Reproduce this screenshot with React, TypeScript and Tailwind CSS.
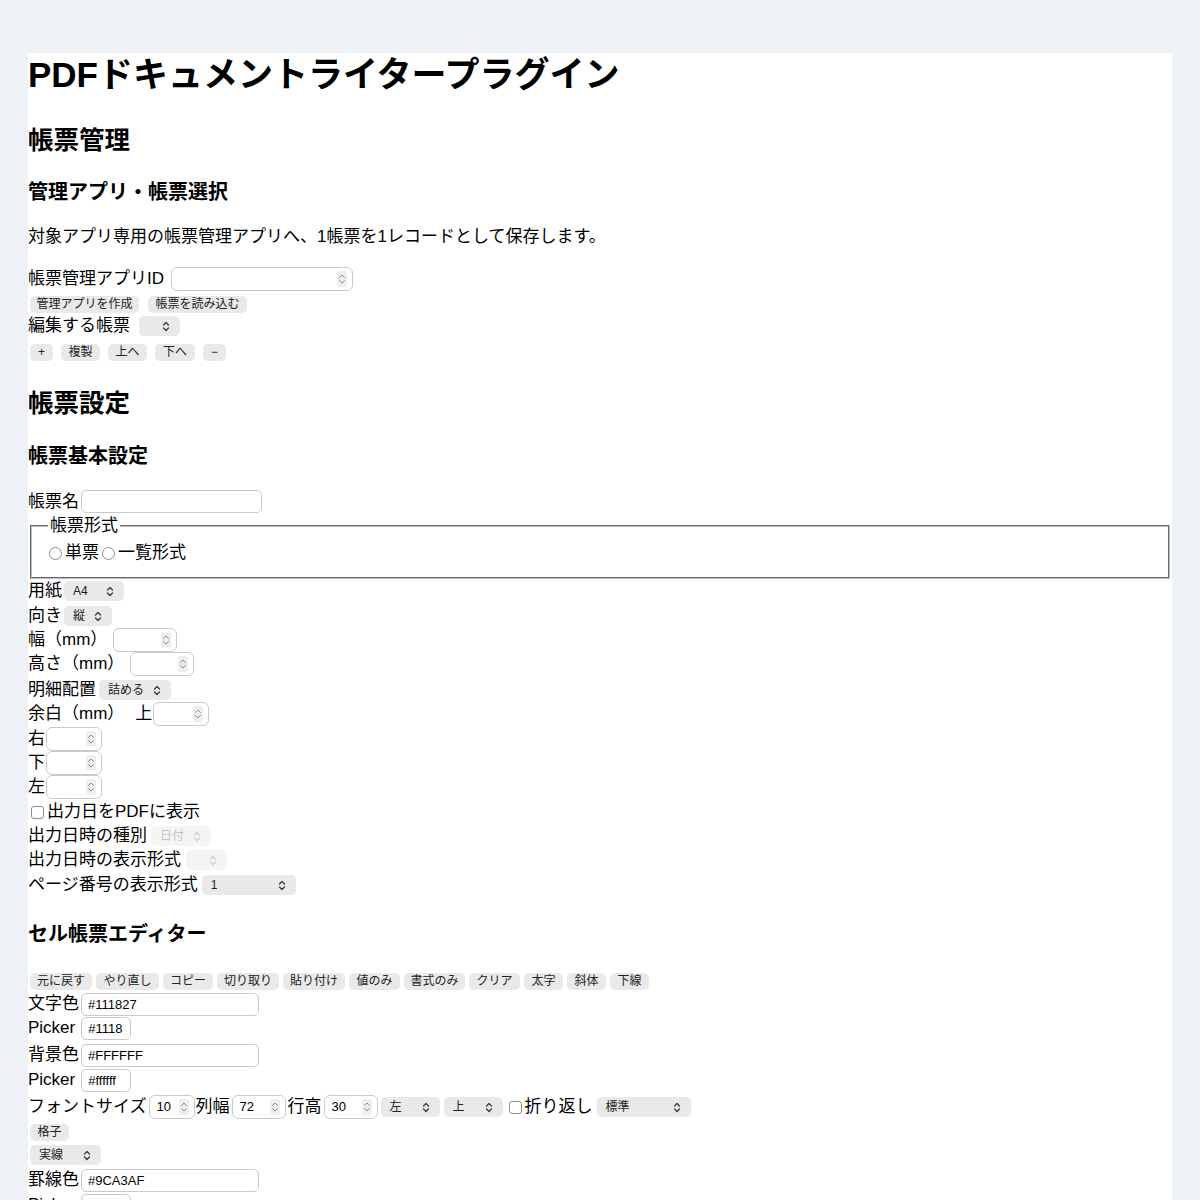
import React from "react";

function Chevrons({ dim }: { dim?: boolean }) {
  return (
    <svg width="8" height="11" viewBox="0 0 8 11" fill="none" stroke={dim ? "#cfcfcf" : "#3a3a3a"} strokeWidth="1.3" strokeLinecap="round" strokeLinejoin="round">
      <path d="M1.5 4 4 1.5 6.5 4M1.5 7 4 9.5 6.5 7" />
    </svg>
  );
}

function Spinner() {
  return (
    <span className="flex h-[16px] w-[10px] items-center justify-center rounded-[3px] bg-[#eeeeee]">
      <svg width="8" height="14" viewBox="0 0 8 14" fill="none" stroke="#8f8f8f" strokeWidth="1" strokeLinecap="round" strokeLinejoin="round">
        <path d="M1.5 5.5 4 3 6.5 5.5M1.5 8.5 4 11 6.5 8.5" />
      </svg>
    </span>
  );
}

function Btn({ label, w }: { label: string; w: string }) {
  return (
    <button type="button" className={`flex h-[17px] items-center justify-center rounded-[5px] bg-[#e9e9e9] text-[12px] leading-none text-[#222] ${w}`}>
      {label}
    </button>
  );
}

function Select({ value = "", w, cls = "ml-[2px]", disabled }: { value?: string; w: string; cls?: string; disabled?: boolean }) {
  return (
    <div
      className={`flex h-[20px] shrink-0 items-center justify-between rounded-[5px] pl-[9px] pr-[10px] text-[12px] ${
        disabled ? "bg-[#f5f5f5] text-[#c4c4c4]" : "bg-[#e9e9e9] text-[#222]"
      } ${w} ${cls}`}
    >
      <span>{value}</span>
      <Chevrons dim={disabled} />
    </div>
  );
}

function NumInput({ value = "", w, cls = "ml-[2px]" }: { value?: string; w: string; cls?: string }) {
  return (
    <div className={`flex h-[24px] shrink-0 items-center justify-between rounded-[6px] border border-[#cacaca] bg-white pl-[7px] pr-[5px] text-[13px] ${w} ${cls}`}>
      <span>{value}</span>
      <Spinner />
    </div>
  );
}

function TextInput({ value = "", w, cls = "ml-[2px]" }: { value?: string; w: string; cls?: string }) {
  return (
    <input
      readOnly
      defaultValue={value}
      className={`h-[23px] shrink-0 rounded-[5px] border border-[#cacaca] bg-white px-[6px] text-[13px] text-black outline-none ${w} ${cls}`}
    />
  );
}

function Box({ cls = "" }: { cls?: string }) {
  return <span className={`h-[13px] w-[13px] shrink-0 rounded-[3px] border border-[#8e8e8e] bg-white ${cls}`} />;
}

function Radio({ cls = "" }: { cls?: string }) {
  return <span className={`h-[13px] w-[13px] shrink-0 rounded-full border border-[#8e8e8e] bg-white ${cls}`} />;
}

const row = "flex h-[24px] items-center text-[17px]";

export default function App() {
  return (
    <div className="min-h-screen bg-[#eef1f6] px-[28px] pt-[53px] font-['Liberation_Sans','Noto_Sans_CJK_JP',sans-serif] text-black">
      <div className="bg-white pb-[40px]">
        <h1 className="flex h-[44px] items-center text-[35px] font-bold">PDFドキュメントライタープラグイン</h1>

        <h2 className="mt-[25px] flex h-[36px] items-center text-[25.5px] font-bold">帳票管理</h2>
        <h3 className="mt-[20px] flex h-[28px] items-center text-[20px] font-bold">管理アプリ・帳票選択</h3>
        <p className="mt-[19px] flex h-[24px] items-center text-[17px]">
          対象アプリ専用の帳票管理アプリへ、1帳票を1レコードとして保存します。
        </p>

        <div className="mt-[17px] flex h-[25px] items-center text-[17px]">
          <span>帳票管理アプリID</span>
          <NumInput w="w-[182px]" cls="ml-[7px]" />
        </div>
        <div className="mt-[2px] flex h-[22px] items-center gap-[9px] pl-[2px]">
          <Btn label="管理アプリを作成" w="w-[109px]" />
          <Btn label="帳票を読み込む" w="w-[99px]" />
        </div>
        <div className="flex h-[22px] items-center text-[17px]">
          <span>編集する帳票</span>
          <Select w="w-[41px]" cls="ml-[9px]" />
        </div>
        <div className="mt-[4px] flex h-[22px] items-center gap-[8px] pl-[2px]">
          <Btn label="+" w="w-[23px]" />
          <Btn label="複製" w="w-[39px]" />
          <Btn label="上へ" w="w-[39px]" />
          <Btn label="下へ" w="w-[40px]" />
          <Btn label="−" w="w-[23px]" />
        </div>

        <h2 className="mt-[22px] flex h-[36px] items-center text-[25.5px] font-bold">帳票設定</h2>
        <h3 className="mt-[21px] flex h-[28px] items-center text-[20px] font-bold">帳票基本設定</h3>

        <div className="mt-[19px] flex h-[25px] items-center text-[17px]">
          <span>帳票名</span>
          <TextInput w="w-[181px]" />
        </div>

        <fieldset className="mx-[2px] border-2 border-[#bdbdbd] px-[16px] pb-[14px] pt-[5px] [border-style:groove]">
          <legend className="px-[2px] text-[17px] leading-[24px]">帳票形式</legend>
          <div className="flex h-[20px] items-center text-[17px]">
            <Radio cls="ml-[1px] mr-[3px]" />
            <span>単票</span>
            <Radio cls="ml-[3px] mr-[3px]" />
            <span>一覧形式</span>
          </div>
        </fieldset>

        <div className={row}>
          <span>用紙</span>
          <Select value="A4" w="w-[60px]" />
        </div>
        <div className={`mt-[1px] ${row}`}>
          <span>向き</span>
          <Select value="縦" w="w-[48px]" />
        </div>
        <div className={row}>
          <span>幅（mm）</span>
          <NumInput w="w-[64px]" cls="ml-[6px]" />
        </div>
        <div className={row}>
          <span>高さ（mm）</span>
          <NumInput w="w-[64px]" cls="ml-[6px]" />
        </div>
        <div className={`mt-[2px] ${row}`}>
          <span>明細配置</span>
          <Select value="詰める" w="w-[72px]" cls="ml-[3px]" />
        </div>
        <div className={row}>
          <span>余白（mm）</span>
          <span className="ml-[11px]">上</span>
          <NumInput w="w-[56px]" cls="ml-[1px]" />
        </div>
        <div className={`mt-[1px] ${row}`}>
          <span>右</span>
          <NumInput w="w-[56px]" cls="ml-[1px]" />
        </div>
        <div className={row}>
          <span>下</span>
          <NumInput w="w-[56px]" cls="ml-[1px]" />
        </div>
        <div className={row}>
          <span>左</span>
          <NumInput w="w-[56px]" cls="ml-[1px]" />
        </div>
        <div className={`mt-[1px] ${row}`}>
          <Box cls="ml-[3px] mr-[3px]" />
          <span>出力日をPDFに表示</span>
        </div>
        <div className={row}>
          <span>出力日時の種別</span>
          <Select value="日付" w="w-[60px]" cls="ml-[4px]" disabled />
        </div>
        <div className={row}>
          <span>出力日時の表示形式</span>
          <Select w="w-[41px]" cls="ml-[5px]" disabled />
        </div>
        <div className={`mt-[1px] ${row}`}>
          <span>ページ番号の表示形式</span>
          <Select value="1" w="w-[94px]" cls="ml-[4px]" />
        </div>

        <h3 className="mt-[23px] flex h-[28px] items-center text-[20px] font-bold">セル帳票エディター</h3>

        <div className="mt-[22px] flex h-[22px] items-center gap-[4px] pl-[2px]">
          <Btn label="元に戻す" w="w-[62px]" />
          <Btn label="やり直し" w="w-[63px]" />
          <Btn label="コピー" w="w-[50px]" />
          <Btn label="切り取り" w="w-[62px]" />
          <Btn label="貼り付け" w="w-[62px]" />
          <Btn label="値のみ" w="w-[51px]" />
          <Btn label="書式のみ" w="w-[61px]" />
          <Btn label="クリア" w="w-[51px]" />
          <Btn label="太字" w="w-[39px]" />
          <Btn label="斜体" w="w-[39px]" />
          <Btn label="下線" w="w-[39px]" />
        </div>
        <div className={row}>
          <span>文字色</span>
          <TextInput value="#111827" w="w-[178px]" />
        </div>
        <div className={row}>
          <span>Picker</span>
          <TextInput value="#1118" w="w-[50px]" cls="ml-[6px]" />
        </div>
        <div className={`mt-[3px] ${row}`}>
          <span>背景色</span>
          <TextInput value="#FFFFFF" w="w-[178px]" />
        </div>
        <div className={`mt-[1px] ${row}`}>
          <span>Picker</span>
          <TextInput value="#ffffff" w="w-[50px]" cls="ml-[6px]" />
        </div>
        <div className={`mt-[3px] ${row}`}>
          <span>フォントサイズ</span>
          <NumInput value="10" w="w-[46px]" />
          <span className="ml-[1px]">列幅</span>
          <NumInput value="72" w="w-[54px]" />
          <span className="ml-[2px]">行高</span>
          <NumInput value="30" w="w-[54px]" />
          <Select value="左" w="w-[59px]" cls="ml-[3px]" />
          <Select value="上" w="w-[59px]" cls="ml-[4px]" />
          <Box cls="ml-[6px] mr-[3px]" />
          <span>折り返し</span>
          <Select value="標準" w="w-[94px]" cls="ml-[4px]" />
        </div>
        <div className="mt-[2px] flex h-[22px] items-center pl-[2px]">
          <Btn label="格子" w="w-[39px]" />
        </div>
        <div className="mt-[1px] flex h-[22px] items-center">
          <Select value="実線" w="w-[71px]" />
        </div>
        <div className={`mt-[2px] ${row}`}>
          <span>罫線色</span>
          <TextInput value="#9CA3AF" w="w-[178px]" />
        </div>
        <div className={`mt-[1px] ${row}`}>
          <span>Picker</span>
          <TextInput value="#9ca3af" w="w-[50px]" cls="ml-[6px]" />
        </div>
      </div>
    </div>
  );
}
